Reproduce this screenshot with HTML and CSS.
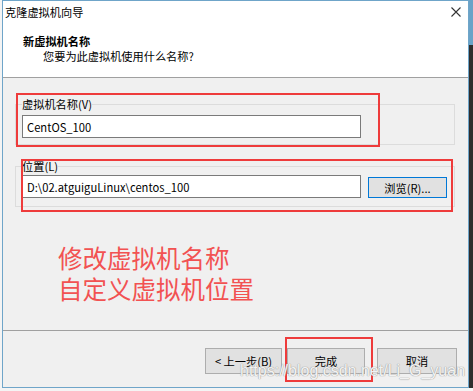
FILE: index.html
```html
<!DOCTYPE html>
<html lang="zh-CN">
<head>
    <meta charset="UTF-8">
    <title>克隆虚拟机向导</title>
    <link rel="stylesheet" href="styles.css">
</head>
<body>
    <div class="screen">
        <div class="window">
            <!-- Title bar + wizard header -->
            <div class="top">
                <div class="titlebar">
                    <span class="title">克隆虚拟机向导</span>
                    <svg class="close" width="10" height="10" viewBox="0 0 10 10">
                        <path d="M0.5 0.5 L9.5 9.5 M9.5 0.5 L0.5 9.5" stroke="#333" stroke-width="1.1" fill="none"/>
                    </svg>
                </div>
                <div class="header">
                    <div class="header-title">新虚拟机名称</div>
                    <div class="header-sub">您要为此虚拟机使用什么名称?</div>
                </div>
            </div>

            <!-- Form -->
            <div class="body">
                <fieldset class="group group-name">
                    <legend>虚拟机名称(V)</legend>
                    <input class="field" type="text" value="CentOS_100">
                </fieldset>

                <fieldset class="group group-path">
                    <legend>位置(L)</legend>
                    <div class="path-row">
                        <input class="field" type="text" value="D:\02.atguiguLinux\centos_100">
                        <button class="btn btn-browse">浏览(R)...</button>
                    </div>
                </fieldset>

                <div class="note">
                    <div>修改虚拟机名称</div>
                    <div>自定义虚拟机位置</div>
                </div>
            </div>

            <!-- Buttons -->
            <div class="footer">
                <button class="btn btn-back">&lt; 上一步(B)</button>
                <button class="btn btn-finish">完成</button>
                <button class="btn btn-cancel">取消</button>
            </div>

            <!-- Annotation boxes -->
            <div class="mark mark-name"></div>
            <div class="mark mark-path"></div>
            <div class="mark mark-finish"></div>

            <div class="watermark">https://blog.csdn.net/Li_G_yuan</div>
        </div>
        <div class="side"></div>
    </div>
</body>
</html>
```

FILE: styles.css
```css
/* Basic Styles */
body {
    margin: 0;
    background: #f4f4f4;
    font-family: "Microsoft YaHei", "Noto Sans CJK SC", sans-serif;
    font-size: 11.2px;
    color: #000;
}

.screen {
    display: flex;
    padding-left: 2px;
}

.window {
    position: relative;
    box-sizing: border-box;
    width: 468px;
    height: 388px;
    border: 1px solid #6fa5c9;
    background: #f0f0f0;
    display: flex;
    flex-direction: column;
}

.side {
    width: 4px;
    height: 388px;
    background: linear-gradient(#6aa3c8 0, #6aa3c8 45px, #2e2e2e 45px);
}

/* Header */
.top {
    height: 76px;
    background: #fff;
    border-bottom: 1px solid #a0a0a0;
}

.titlebar {
    height: 24px;
    display: flex;
    justify-content: space-between;
    align-items: flex-start;
}

.title {
    padding-left: 2px;
    line-height: 22px;
}

.close {
    margin-top: 6px;
    margin-right: 7px;
}

.header {
    padding-top: 9px;
}

.header-title {
    padding-left: 20px;
    font-weight: bold;
    line-height: 15px;
}

.header-sub {
    padding-left: 40px;
    line-height: 15px;
}

/* Form */
.body {
    flex: 1;
}

.group {
    box-sizing: border-box;
    margin: 0 13px 0 12px;
    border: 1px solid #dcdcdc;
    padding: 4px 0 6px 6px;
    min-width: 0;
}

.group legend {
    padding: 0;
    line-height: 14px;
}

.group-name {
    margin-top: 19px;
}

.group-path {
    margin-top: 14px;
    padding-top: 2px;
    padding-bottom: 8px;
}

.field {
    box-sizing: border-box;
    display: block;
    width: 339px;
    height: 23px;
    margin: 0;
    padding: 0 4px;
    border: 1px solid #7a7a7a;
    background: #fff;
    font: inherit;
    color: #000;
}

.path-row {
    display: flex;
    align-items: flex-start;
    gap: 7px;
}

.btn {
    box-sizing: border-box;
    height: 26px;
    margin: 0;
    padding: 0;
    border: 1px solid #adadad;
    background: #e1e1e1;
    font: inherit;
    color: #000;
}

.btn-browse {
    width: 79px;
    height: 21px;
    margin-top: 2px;
    border-color: #0078d7;
}

.note {
    margin-top: 35px;
    padding-left: 55px;
    font-size: 24.5px;
    line-height: 31px;
    color: #f25252;
}

/* Footer */
.footer {
    box-sizing: border-box;
    height: 57px;
    border-top: 1px solid #a0a0a0;
    padding: 17px 11px 0 0;
    display: flex;
    justify-content: flex-end;
    align-items: flex-start;
}

.btn-back {
    width: 77px;
}

.btn-finish {
    width: 78px;
    margin-left: 5px;
}

.btn-cancel {
    width: 80px;
    margin-left: 12px;
}

/* Red annotation frames */
.mark {
    position: absolute;
    box-sizing: border-box;
    border: 2px solid #ee3b3b;
}

.mark-name {
    left: 13px;
    top: 92px;
    width: 364px;
    height: 54px;
}

.mark-path {
    left: 18px;
    top: 158px;
    width: 432px;
    height: 53px;
}

.mark-finish {
    left: 282px;
    top: 336px;
    width: 88px;
    height: 45px;
}

.watermark {
    position: absolute;
    left: 237px;
    top: 361px;
    font-family: "Liberation Sans", Arial, sans-serif;
    font-size: 16px;
    color: rgba(255, 255, 255, 0.9);
    text-shadow: 0 0 1px #9a9a9a, 0 0 1px #9a9a9a;
    white-space: nowrap;
}
```
